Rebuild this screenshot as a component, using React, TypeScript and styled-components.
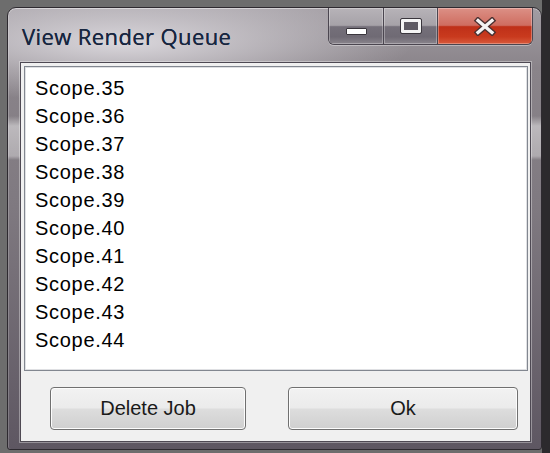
import styled, { createGlobalStyle } from "styled-components";

const GlobalStyle = createGlobalStyle`
    html, body {
        margin: 0;
        padding: 0;
        width: 550px;
        height: 453px;
        overflow: hidden;
    }
    body {
        background: linear-gradient(90deg, #6d6d6d 0, #6d6d6d 542px, #2c2a2d 542px);
        font-family: "Liberation Sans", Arial, sans-serif;
    }
`;

const jobs = ["35", "36", "37", "38", "39", "40", "41", "42", "43", "44"];

export default function App() {
    return (
        <>
            <GlobalStyle />
            <Desktop>
                <Window>
                    <TitleBar>
                        <Title>View Render Queue</Title>
                        <Captions>
                            <CaptionButton kind="min">
                                <MinGlyph />
                            </CaptionButton>
                            <CaptionButton kind="max">
                                <MaxGlyph />
                            </CaptionButton>
                            <CaptionButton kind="close">
                                <svg width="26" height="19" viewBox="0 0 26 19">
                                    <path
                                        d="M6 3.5 L20 15.5 M20 3.5 L6 15.5"
                                        stroke="#4a3030"
                                        strokeWidth="6"
                                        strokeLinecap="square"
                                    />
                                    <path
                                        d="M6 3.5 L20 15.5 M20 3.5 L6 15.5"
                                        stroke="#f4f2f2"
                                        strokeWidth="3.3"
                                        strokeLinecap="square"
                                    />
                                </svg>
                            </CaptionButton>
                        </Captions>
                    </TitleBar>
                    <Client>
                        <ListBox>
                            {jobs.map((n) => (
                                <ListItem key={n}>Scope.{n}</ListItem>
                            ))}
                        </ListBox>
                        <ButtonRow>
                            <PushButton width={196}>Delete Job</PushButton>
                            <PushButton width={230}>Ok</PushButton>
                        </ButtonRow>
                    </Client>
                </Window>
            </Desktop>
        </>
    );
}

// style
const Desktop = styled.div`
    padding: 7px 0 0 7px;
`;

const Window = styled.div`
    box-sizing: border-box;
    width: 535px;
    height: 443px;
    display: flex;
    flex-direction: column;
    padding: 0 10px 7px 12px;
    border: 1px solid #2e2a30;
    border-radius: 9px 9px 3px 3px;
    box-shadow: inset 0 1px 0 rgba(255, 255, 255, 0.45),
        inset 1px 0 0 rgba(255, 255, 255, 0.2);
    background:
        linear-gradient(180deg, transparent 108px, rgba(255, 255, 255, 0.45) 118px, rgba(255, 255, 255, 0.35) 148px, transparent 152px),
        radial-gradient(ellipse 290px 60px at 115px 34px, rgba(218, 215, 220, 1), rgba(218, 215, 220, 0) 100%),
        linear-gradient(180deg, #a29da3 0, #8a848a 60px, #7f7980 200px, #5e5762 100%);
`;

const TitleBar = styled.div`
    height: 54px;
    display: flex;
    justify-content: space-between;
    align-items: flex-start;
`;

const Title = styled.span`
    margin: 13px 0 0 2px;
    font-family: "Open Sans", "Noto Sans", sans-serif;
    font-size: 22px;
    letter-spacing: 0.4px;
    color: #172640;
    text-shadow: 0 0 0.4px #172640;
`;

const Captions = styled.div`
    display: flex;
    margin-right: -2px;
    border: 1px solid #4b4650;
    border-top: 0;
    border-radius: 0 0 6px 6px;
    overflow: hidden;
    box-shadow: 0 1px 0 rgba(255, 255, 255, 0.35);
`;

const CaptionButton = styled.div<{ kind: "min" | "max" | "close" }>`
    width: ${(p) => (p.kind === "close" ? 95 : 54)}px;
    height: 36px;
    display: flex;
    align-items: ${(p) => (p.kind === "min" ? "flex-end" : "center")};
    padding-bottom: ${(p) => (p.kind === "min" ? 9 : 0)}px;
    box-sizing: border-box;
    justify-content: center;
    border-left: ${(p) => (p.kind === "min" ? "0" : "1px solid #4b4650")};
    box-shadow: inset 0 0 0 1px rgba(255, 255, 255, 0.3);
    background: ${(p) =>
        p.kind === "close"
            ? "linear-gradient(180deg, #dc9086 0, #cf6d60 48%, #bf3018 52%, #c93a1e 80%, #d85a3c 100%)"
            : "linear-gradient(180deg, #b7b3b8 0, #a6a2a8 48%, #75707a 52%, #6f6a74 80%, #8a858d 100%)"};
`;

const MinGlyph = styled.div`
    width: 19px;
    height: 5px;
    background: #ffffff;
    border: 1px solid #3a363d;
    border-radius: 1px;
`;

const MaxGlyph = styled.div`
    width: 14px;
    height: 8px;
    margin-top: -1px;
    background: #5e5a63;
    border: 3px solid #f4f4f4;
    outline: 1px solid #3a363d;
    border-radius: 1px;
`;

const Client = styled.div`
    flex: 1;
    display: flex;
    flex-direction: column;
    background: #f0f0f0;
    border: 1px solid #4e4953;
    box-shadow: 0 0 0 1px rgba(255, 255, 255, 0.35);
    padding: 3px 2px 0 3px;
`;

const ListBox = styled.div`
    height: 305px;
    box-sizing: border-box;
    background: #ffffff;
    border: 1px solid #828790;
    box-shadow: inset 0 0 0 1px #dfe0e3;
    padding: 7px 10px;
`;

const ListItem = styled.div`
    height: 28px;
    line-height: 28px;
    font-size: 20px;
    letter-spacing: 0.7px;
    color: #000000;
`;

const ButtonRow = styled.div`
    display: flex;
    gap: 42px;
    margin: 16px 0 0 26px;
`;

const PushButton = styled.div<{ width: number }>`
    width: ${(p) => p.width}px;
    height: 43px;
    box-sizing: border-box;
    display: flex;
    align-items: center;
    justify-content: center;
    font-size: 20px;
    color: #1a1a1a;
    border: 1px solid #707070;
    border-radius: 4px;
    box-shadow: inset 0 0 0 1px #fcfcfc;
    background: linear-gradient(180deg, #f2f2f2 0, #ebebeb 48%, #dddddd 52%, #cfcfcf 100%);
`;
